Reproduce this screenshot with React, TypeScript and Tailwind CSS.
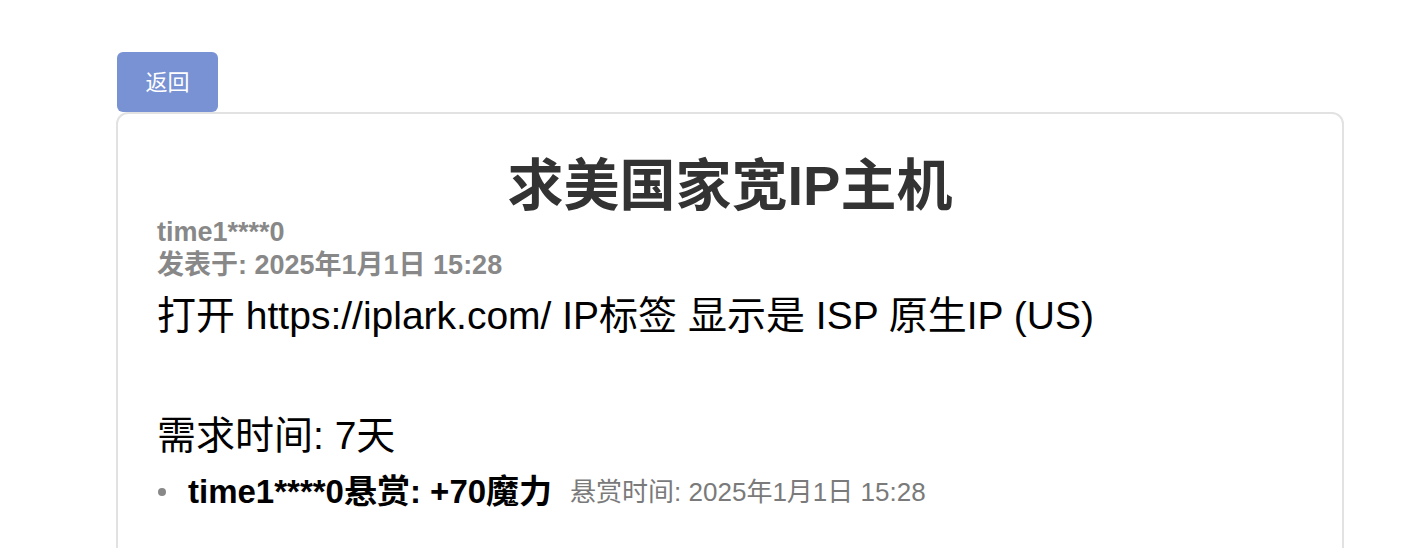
import React from "react";

const font = {
  fontFamily: '"Liberation Sans", "Noto Sans CJK SC", sans-serif',
};

const post = {
  title: "求美国家宽IP主机",
  author: "time1****0",
  postedAt: "2025年1月1日 15:28",
  body: "打开 https://iplark.com/ IP标签 显示是 ISP 原生IP (US)\n\n需求时间: 7天",
  rewards: [
    { user: "time1****0", amount: "+70魔力", time: "2025年1月1日 15:28" },
  ],
};

function RewardItem({
  reward,
}: {
  reward: { user: string; amount: string; time: string };
}) {
  return (
    <li className="flex items-center leading-[38px]">
      <span className="ml-[1px] mr-[22px] h-[8px] w-[8px] shrink-0 rounded-full bg-[#888]" />
      <span className="text-[33px] font-bold text-black">
        {reward.user}悬赏: {reward.amount}
      </span>
      <span className="ml-[18px] text-[26px] text-[#7a7a7a]">悬赏时间: {reward.time}</span>
    </li>
  );
}

export default function App() {
  return (
    <div className="min-h-screen bg-white" style={font}>
      <div className="pt-[52px]">
        <button className="ml-[117px] flex h-[60px] w-[101px] items-center justify-center rounded-[6px] bg-[#7992d3] text-[22px] text-white">
          返回
        </button>
        <div className="ml-[116px] w-[1228px] rounded-[12px] border-2 border-[#e2e2e2] px-[39px] pt-[42px] pb-[120px]">
          <h1 className="text-center text-[56px] font-bold leading-[60px] text-[#333]">
            {post.title}
          </h1>
          <div className="text-[27px] font-bold leading-[33px] text-[#888]">
            <div>{post.author}</div>
            <div>发表于: {post.postedAt}</div>
          </div>
          <p className="mt-[4px] whitespace-pre-wrap text-[39px] leading-[60px] text-black">
            {post.body}
          </p>
          <ul className="mt-[7px]">
            {post.rewards.map((r, i) => (
              <RewardItem reward={r} key={i} />
            ))}
          </ul>
        </div>
      </div>
    </div>
  );
}
